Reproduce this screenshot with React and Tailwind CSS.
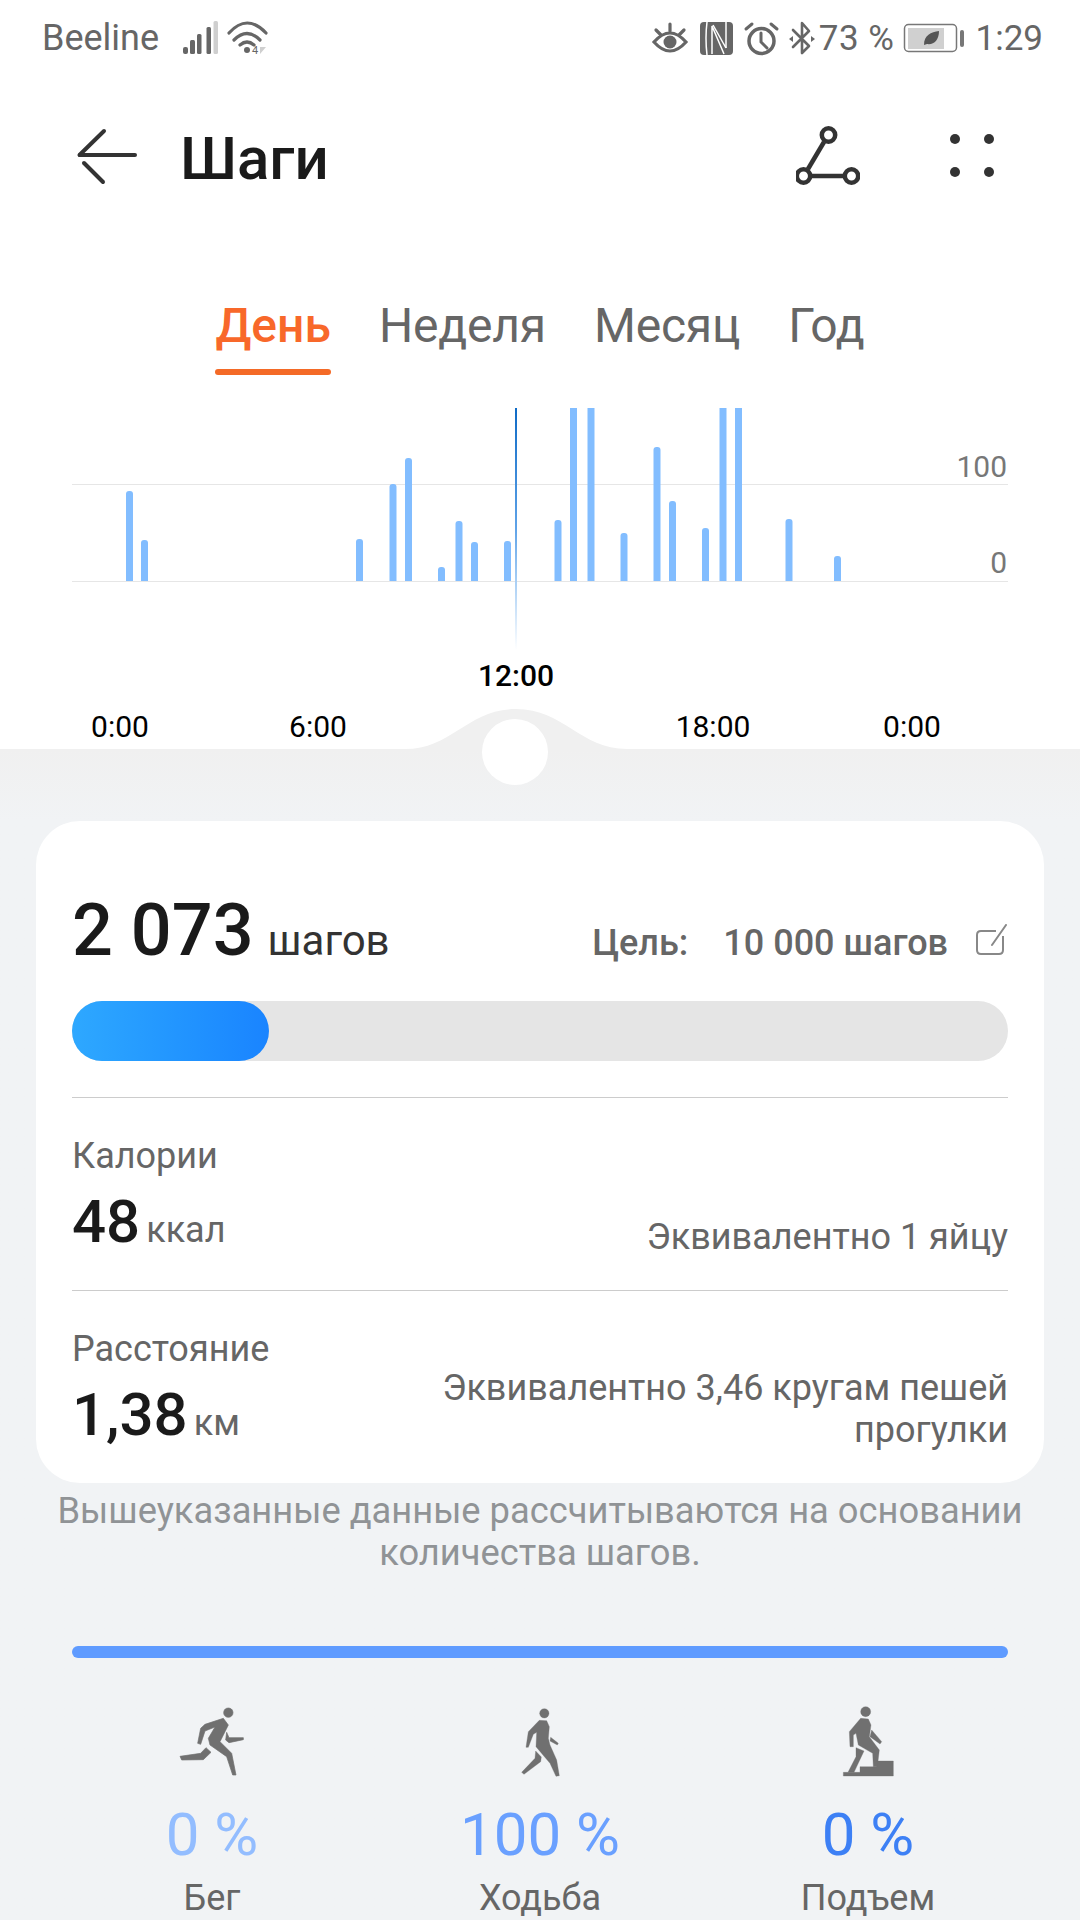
import React from "react";

const BASE = 581;
const BARS = [
  [126, 491], [141, 540], [356, 539], [389.5, 484], [405, 458], [438, 567], [455.5, 521], [471, 542], [504, 541],
  [554.5, 520], [570, 408], [587.5, 408], [620.5, 533], [653.5, 447], [669, 501], [702, 528], [719.5, 408], [735, 408], [785.5, 519], [834, 556],
];

function Bar({ x, top }) {
  const w = 7;
  const d = top <= 408
    ? `M${x} ${BASE}V${top}H${x + w}V${BASE}Z`
    : `M${x} ${BASE}V${top + 3}Q${x} ${top} ${x + 3} ${top}H${x + w - 3}Q${x + w} ${top} ${x + w} ${top + 3}V${BASE}Z`;
  return <path d={d} fill="#82bdff" />;
}

function Chart() {
  return (
    <div className="relative h-[349px] w-[1080px]">
      <svg width="1080" height="349" viewBox="0 400 1080 349" className="block">
        <defs>
          <linearGradient id="cur" gradientUnits="userSpaceOnUse" x1="0" y1="408" x2="0" y2="650">
            <stop offset="0" stopColor="#0f6bc6" />
            <stop offset="0.5" stopColor="#5fa3e8" />
            <stop offset="0.72" stopColor="#a9cff5" />
            <stop offset="1" stopColor="#ffffff" />
          </linearGradient>
        </defs>
        <rect x="72" y="484" width="936" height="1" fill="#e6e6e6" />
        <rect x="72" y="581" width="936" height="1" fill="#e6e6e6" />
        {BARS.map(([x, t]) => (
          <Bar key={x} x={x} top={t} />
        ))}
        <rect x="515" y="408" width="2" height="242" fill="url(#cur)" />
        <path d="M405 749C452 749 468 709 516 709C564 709 580 749 627 749Z" fill="#f0f0f0" />
      </svg>
      <span className="absolute right-[73px] top-[52px] text-[30px] leading-none text-[#777]">100</span>
      <span className="absolute right-[73px] top-[148px] text-[30px] leading-none text-[#777]">0</span>
      <span className="absolute left-[516px] top-[261px] -translate-x-1/2 text-[30px] font-medium leading-none text-black">12:00</span>
      <span className="absolute left-[120px] top-[312px] -translate-x-1/2 text-[30px] leading-none text-black">0:00</span>
      <span className="absolute left-[318px] top-[312px] -translate-x-1/2 text-[30px] leading-none text-black">6:00</span>
      <span className="absolute left-[713px] top-[312px] -translate-x-1/2 text-[30px] leading-none text-black">18:00</span>
      <span className="absolute left-[912px] top-[312px] -translate-x-1/2 text-[30px] leading-none text-black">0:00</span>
      <div className="absolute left-[482px] top-[319px] z-10 h-[66px] w-[66px] rounded-full bg-white" />
    </div>
  );
}

function StatusBar() {
  return (
    <div className="flex h-[76px] items-center justify-between pl-[42px] pr-[37px] text-[35px] leading-none text-[#666]">
      <div className="flex items-center">
        <span className="text-[36px]">Beeline</span>
        <svg width="90" height="40" viewBox="183 16 90 40" className="ml-[24px] block">
          <g fill="#666">
            <rect x="183" y="45" width="5" height="7" rx="2" />
            <rect x="190" y="38" width="5" height="14" rx="1.5" />
            <rect x="197" y="32" width="4.5" height="20" rx="1.5" />
            <rect x="206.5" y="25" width="4.5" height="27" rx="1.5" />
            <rect x="213.5" y="19" width="4.5" height="33" rx="1.5" fill="#cfcfcf" />
          </g>
          <g fill="none" stroke="#666" strokeWidth="3.2" strokeLinecap="round">
            <path d="M229 31Q247 11 266 31" />
            <path d="M234 38Q247 25 260 38" />
            <path d="M240 43Q247 37 254 43" />
          </g>
          <circle cx="247" cy="48" r="3" fill="#666" />
          <text x="252" y="52" fontSize="11" fill="#666" fontFamily="Roboto, sans-serif">4</text>
          <path d="M260 45H266L260 52Z" fill="#cfcfcf" />
        </svg>
      </div>
      <div className="flex items-center">
        <svg width="166" height="40" viewBox="650 16 166 40" className="block">
          <g fill="none" stroke="#666" strokeWidth="3.2" strokeLinecap="round">
            <path d="M654 40Q670 22 686 40Q670 58 654 40Z" />
            <path d="M670 22V29" />
            <path d="M656 28L661 33" />
            <path d="M684 28L679 33" />
          </g>
          <circle cx="670" cy="40" r="6.5" fill="#666" />
          <rect x="700" y="20" width="33" height="33" rx="4" fill="#666" />
          <g fill="none" stroke="#fff" strokeWidth="1.5">
            <path d="M707 20Q705 36 707 53" />
            <path d="M712 52V24L724 52" />
            <path d="M726 46V20" />
            <path d="M713 23L726 46" />
          </g>
          <g fill="none" stroke="#666" strokeLinecap="round">
            <circle cx="761.5" cy="39" r="12.5" strokeWidth="3.5" />
            <path d="M761 31V40L767 46" strokeWidth="3" />
            <path d="M746 27L752 22" strokeWidth="3" />
            <path d="M777 27L771 22" strokeWidth="3" />
          </g>
          <path d="M793 28L809 44L802 51V21L809 29L793 45" fill="none" stroke="#666" strokeWidth="2.6" strokeLinejoin="round" strokeLinecap="round" />
          <path d="M789 37L793 34V40Z" fill="#666" />
          <path d="M815 37L811 34V40Z" fill="#666" />
        </svg>
        <span className="ml-[3px] tracking-[0.5px]">73 %</span>
        <svg width="62" height="40" viewBox="903 16 62 40" className="ml-[8px] block">
          <rect x="904.5" y="22.5" width="52" height="27" rx="4" fill="none" stroke="#777" strokeWidth="1.5" />
          <rect x="908" y="26" width="36" height="21" fill="#d0d0d0" />
          <rect x="960" y="28" width="4" height="17" rx="2" fill="#777" />
          <path d="M924 43C924 33 931 30 939 29C939 38 934 43 927 42Z" fill="#555" />
        </svg>
        <span className="ml-[11px]">1:29</span>
      </div>
    </div>
  );
}

function Header() {
  return (
    <div className="mt-[24px] flex h-[110px] items-center pl-[75px] pr-[84px]">
      <svg width="64" height="64" viewBox="76 123 64 64" className="block">
        <g fill="none" stroke="#333" strokeWidth="4" strokeLinecap="round">
          <path d="M105 131L80.500 155" />
          <path d="M81 155H136" />
          <path d="M85 163L104 182" />
        </g>
      </svg>
      <div className="ml-[41px] pt-2 text-[60px] font-medium leading-none text-[#1a1a1a]">Шаги</div>
      <svg width="64" height="64" viewBox="796 123 64 64" className="ml-auto block">
        <g fill="none" stroke="#333" strokeWidth="4.5">
          <path d="M824 142L808 169" />
          <path d="M810.500 176H844.500" />
          <circle cx="828.500" cy="135" r="6.700" />
          <circle cx="803.500" cy="176" r="6.700" />
          <circle cx="851.500" cy="176" r="6.700" />
        </g>
      </svg>
      <svg width="48" height="48" viewBox="948 131 48 48" className="ml-[88px] block">
        <g fill="#333">
          <circle cx="955" cy="139" r="5" />
          <circle cx="989" cy="139" r="5" />
          <circle cx="955" cy="172" r="5" />
          <circle cx="989" cy="172" r="5" />
        </g>
      </svg>
    </div>
  );
}

function Tabs() {
  return (
    <div className="mt-[92px] flex h-[73px] items-start justify-center gap-[48px] text-[48px] leading-none tracking-[-0.2px] text-[#666]">
      <div className="flex flex-col">
        <span className="font-medium tracking-normal text-[#f8682a]">День</span>
        <div className="mt-[19px] h-[6px] rounded-full bg-[#f46a27]" />
      </div>
      <span>Неделя</span>
      <span>Месяц</span>
      <span>Год</span>
    </div>
  );
}

function Card() {
  return (
    <div className="mx-[36px] h-[662px] rounded-[44px] bg-white px-[36px] pt-[74px]">
      <div className="flex h-[72px] items-baseline">
        <span className="text-[72px] font-medium leading-none text-[#1a1a1a]">2 073</span>
        <span className="ml-[14px] text-[42px] leading-none text-[#333]">шагов</span>
        <span className="ml-auto text-[36px] font-medium leading-none text-[#666]">Цель:</span>
        <span className="ml-[35px] text-[36px] font-medium leading-none text-[#666]">10 000 шагов</span>
        <svg width="32" height="32" viewBox="975 924 32 32" className="ml-[28px] block self-start translate-y-[29px]">
          <path d="M995 931H980Q976 931 976 935V950Q976 954 980 954H998Q1002 954 1002 950V936" fill="none" stroke="#888" strokeWidth="2" />
          <path d="M1005 925L991 945" fill="none" stroke="#888" strokeWidth="2" strokeLinecap="round" />
        </svg>
      </div>
      <div className="mt-[34px] h-[60px] rounded-full bg-[#e5e5e5]">
        <div className="h-full w-[197px] rounded-full bg-linear-to-r from-[#2ea8ff] to-[#1a84ff]" />
      </div>
      <div className="mt-[36px] h-px bg-[#cccccc]" />
      <div className="mt-[40px] flex h-[112px] items-start justify-between">
        <div>
          <div className="text-[36px] leading-none text-[#666]">Калории</div>
          <div className="mt-[18px] flex items-baseline">
            <span className="text-[60px] font-medium leading-none text-[#1a1a1a]">48</span>
            <span className="ml-[6px] text-[36px] leading-none text-[#666]">ккал</span>
          </div>
        </div>
        <div className="mt-[78px] w-[600px] text-right text-[36px] leading-[42px] text-[#666]">Эквивалентно 1 яйцу</div>
      </div>
      <div className="mt-[40px] h-px bg-[#cccccc]" />
      <div className="mt-[40px] flex items-start justify-between">
        <div>
          <div className="text-[36px] leading-none text-[#666]">Расстояние</div>
          <div className="mt-[18px] flex items-baseline">
            <span className="text-[60px] font-medium leading-none text-[#1a1a1a]">1,38</span>
            <span className="ml-[6px] text-[36px] leading-none text-[#666]">км</span>
          </div>
        </div>
        <div className="mt-[36px] w-[600px] text-right text-[36px] leading-[42px] text-[#666]">Эквивалентно 3,46 кругам пешей прогулки</div>
      </div>
    </div>
  );
}

function RunIcon() {
  return (
    <svg width="100" height="90" viewBox="0 0 300 270" className="mr-[4px] block" fill="#707070" stroke="#707070" strokeWidth="2" strokeLinejoin="round">
      <circle cx="205" cy="53" r="14" />
      <path d="M190 70L135 88L122 100L113 145L122 148L135 108L165 96L145 130L150 150L200 185L218 240L228 240L215 175L180 140L205 90Z" />
      <path d="M200 112L207 128L250 128L250 134L207 143L197 135Z" />
      <path d="M60 184L122 175L138 158L153 172L130 194L65 195Z" />
    </svg>
  );
}

function WalkIcon() {
  return (
    <svg width="100" height="90" viewBox="0 0 300 270" className="ml-[20px] block" fill="#707070" stroke="#707070" strokeWidth="1" strokeLinejoin="round">
      <circle cx="133" cy="55" r="14" />
      <path d="M118 76L140 77L148 95L145 130L150 150L170 195L178 242L168 244L150 205L108 155L110 112L100 118L85 157L78 157L85 110Z" />
      <path d="M152 127L175 145L172 150L150 138Z" />
      <path d="M107 168L124 186L122 200L72 238L65 232L105 190Z" />
    </svg>
  );
}

function ClimbIcon() {
  return (
    <svg width="100" height="90" viewBox="0 0 300 270" className="ml-[4px] block" fill="#707070" stroke="#707070" strokeWidth="1" strokeLinejoin="round">
      <circle cx="137" cy="50" r="15" />
      <path d="M122 70L145 72L153 90L148 125L178 165L172 215L160 215L158 175L115 150L108 115L100 120L100 155L90 155L88 110Z" />
      <path d="M155 105L185 140L180 147L150 125Z" />
      <path d="M108 158L132 168L102 232L84 232L108 185Z" />
      <path d="M70 232H120V215H170V198H220V243H70Z" />
    </svg>
  );
}

function Stat({ icon, value, label, color }) {
  return (
    <div className="flex w-[328px] flex-col items-center">
      {icon}
      <div className={`mt-[20px] text-[60px] leading-none ${color}`}>{value}</div>
      <div className="mt-[15px] text-[36px] leading-none text-[#666]">{label}</div>
    </div>
  );
}

export default function App() {
  return (
    <div className="h-[1920px] w-[1080px] overflow-hidden bg-white font-['Roboto',sans-serif]">
      <StatusBar />
      <Header />
      <Tabs />
      <div className="mt-[25px]">
        <Chart />
      </div>
      <div className="h-[1171px] bg-linear-to-b from-[#f0f0f0] to-[#f1f3f5] to-[72px] pt-[72px]">
        <Card />
        <div className="mt-[7px] text-center text-[36.3px] leading-[42px] text-[#909396]">
          Вышеуказанные данные рассчитываются на основании
          <br />
          количества шагов.
        </div>
        <div className="mx-[72px] mt-[72px] h-[12px] rounded-full bg-[#5f9bff]" />
        <div className="mt-[37px] flex justify-center">
          <Stat icon={<RunIcon />} value="0 %" label="Бег" color="text-[#93bdff]" />
          <Stat icon={<WalkIcon />} value="100 %" label="Ходьба" color="text-[#6aa0ff]" />
          <Stat icon={<ClimbIcon />} value="0 %" label="Подъем" color="text-[#3d80f5]" />
        </div>
      </div>
    </div>
  );
}
